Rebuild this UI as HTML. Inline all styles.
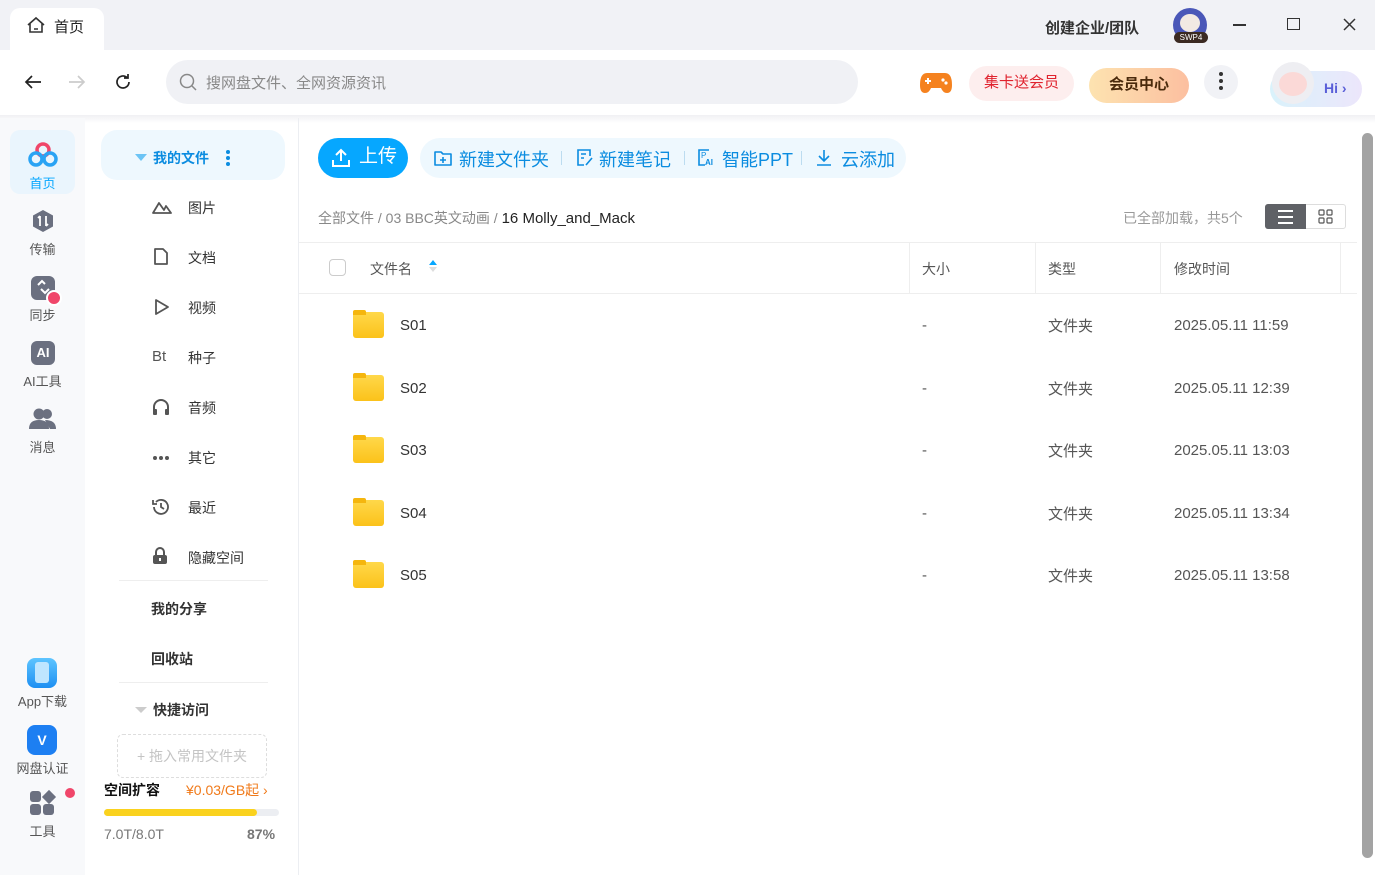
<!DOCTYPE html>
<html><head><meta charset="utf-8"><style>
*{box-sizing:border-box;margin:0;padding:0}
body{width:1375px;height:875px;overflow:hidden;background:#fff;font-family:"Liberation Sans","Noto Sans CJK SC",sans-serif;color:#333;position:relative}
.a{position:absolute}
.t{position:absolute;white-space:nowrap}
svg{position:absolute}
</style></head><body>
<div class="a" style="left:0;top:0;width:1375px;height:50px;background:#f1f2f6"></div>
<div class="a" style="left:10px;top:8px;width:94px;height:42px;background:#fff;border-radius:10px 10px 0 0"></div>
<svg style="left:26px;top:16px" width="20" height="18" viewBox="0 0 20 18"><path d="M2 9 L10 2 L18 9 M4 7 V16 H16 V7 M8 13 H12" fill="none" stroke="#333" stroke-width="1.6"/></svg>
<div class="t" style="left:54px;top:16px;font-size:15px;color:#222">首页</div>
<div class="t" style="left:1045px;top:17px;font-size:15px;color:#333;font-weight:bold">创建企业/团队</div>
<div class="a" style="left:1173px;top:8px;width:34px;height:34px;border-radius:50%;background:#4a57b8"></div>
<div class="a" style="left:1180px;top:14px;width:20px;height:18px;border-radius:50%;background:#f2e9e3"></div>
<div class="t" style="left:1174px;top:32px;width:34px;height:11px;background:#3b2a22;border-radius:6px;color:#fff;font-size:8px;text-align:center;line-height:11px">SWP4</div>
<div class="a" style="left:1233px;top:24px;width:13px;height:1.5px;background:#333"></div>
<div class="a" style="left:1287px;top:18px;width:13px;height:12px;border:1.5px solid #333"></div>
<svg style="left:1343px;top:18px" width="13" height="13"><path d="M1 1L12 12M12 1L1 12" stroke="#333" stroke-width="1.5"/></svg>
<svg style="left:24px;top:74px" width="18" height="16"><path d="M17 8H2M8 2L2 8L8 14" fill="none" stroke="#222" stroke-width="1.7"/></svg>
<svg style="left:68px;top:74px" width="18" height="16"><path d="M1 8H16M10 2L16 8L10 14" fill="none" stroke="#ccc" stroke-width="1.7"/></svg>
<svg style="left:114px;top:73px" width="18" height="18"><path d="M15 9A6 6 0 1 1 13 4.5M14 1V5H10" fill="none" stroke="#222" stroke-width="1.7"/></svg>
<div class="a" style="left:166px;top:60px;width:692px;height:44px;background:#f0f1f5;border-radius:22px"></div>
<svg style="left:179px;top:73px" width="20" height="20"><circle cx="8" cy="8" r="6.5" fill="none" stroke="#888" stroke-width="1.5"/><path d="M13 13L17 17" stroke="#888" stroke-width="1.5"/></svg>
<div class="t" style="left:206px;top:72px;font-size:15px;color:#888">搜网盘文件、全网资源资讯</div>
<svg style="left:919px;top:71px" width="34" height="24"><path d="M8 2H26Q33 2 33 14Q33 22 28 22Q24 22 22 17H12Q10 22 6 22Q1 22 1 14Q1 2 8 2Z" fill="#f5821f"/><path d="M6 10H12M9 7V13" stroke="#fff" stroke-width="2"/><circle cx="24" cy="9" r="1.6" fill="#fff"/><circle cx="27" cy="12" r="1.6" fill="#fff"/></svg>
<div class="t" style="left:969px;top:66px;width:105px;height:35px;border-radius:18px;background:#fdeeee;color:#e0232e;font-size:15px;text-align:center;line-height:33px">集卡送会员</div>
<div class="t" style="left:1089px;top:68px;width:100px;height:35px;border-radius:18px;background:linear-gradient(90deg,#fde3b0,#fcbfa0);color:#4a2a0c;font-size:15px;font-weight:bold;text-align:center;line-height:33px">会员中心</div>
<div class="a" style="left:1204px;top:65px;width:34px;height:34px;border-radius:50%;background:#f1f2f6"></div>
<div class="a" style="left:1219px;top:72px;width:4px;height:4px;border-radius:50%;background:#333;box-shadow:0 7px 0 #333,0 14px 0 #333"></div>
<div class="a" style="left:1270px;top:71px;width:92px;height:36px;border-radius:18px;background:linear-gradient(90deg,#d9f2fb,#ece6fb)"></div>
<div class="a" style="left:1272px;top:62px;width:42px;height:42px;border-radius:50%;background:#eeeef2"></div>
<div class="a" style="left:1279px;top:72px;width:28px;height:24px;border-radius:50%;background:#fbd9d7"></div>
<div class="t" style="left:1324px;top:80px;font-size:14px;color:#5a5fd8;font-weight:bold">Hi ›</div>
<div class="a" style="left:0;top:115px;width:1375px;height:8px;background:linear-gradient(#f0f0f3,#fff)"></div>
<div class="a" style="left:0;top:118px;width:85px;height:757px;background:#f8f9fb"></div>
<div class="a" style="left:10px;top:130px;width:65px;height:64px;border-radius:10px;background:#eaf5fd"></div>
<svg style="left:28px;top:142px" width="30" height="26"><circle cx="15" cy="8" r="6" fill="none" stroke="#f0466a" stroke-width="3.5"/><circle cx="8" cy="17" r="6" fill="none" stroke="#2aa3f4" stroke-width="3.5"/><circle cx="22" cy="17" r="6" fill="none" stroke="#2aa3f4" stroke-width="3.5"/></svg>
<div class="t" style="left:0;top:173px;width:85px;text-align:center;font-size:13px;color:#06a7ff">首页</div>
<svg style="left:31px;top:209px" width="24" height="24"><path d="M12 1L22 6.5V17.5L12 23L2 17.5V6.5Z" fill="#6b7080"/><path d="M9 7V17M9 7L7 9M15 7V17M15 17L17 15" stroke="#fff" stroke-width="1.8"/></svg>
<div class="t" style="left:0;top:239px;width:85px;text-align:center;font-size:13px;color:#555">传输</div>
<div class="a" style="left:31px;top:276px;width:24px;height:24px;border-radius:6px;background:#6b7080"></div>
<svg style="left:34px;top:279px" width="18" height="18"><path d="M4 6L8 2L11 5M7 10L11 14L15 10" fill="none" stroke="#fff" stroke-width="2"/></svg>
<div class="a" style="left:46px;top:290px;width:16px;height:16px;border-radius:50%;background:#f0466a;border:2px solid #fff"></div>
<div class="t" style="left:0;top:305px;width:85px;text-align:center;font-size:13px;color:#555">同步</div>
<div class="t" style="left:31px;top:341px;width:24px;height:24px;border-radius:6px;background:#6b7080;color:#fff;font-size:13px;font-weight:bold;text-align:center;line-height:24px">AI</div>
<div class="t" style="left:0;top:371px;width:85px;text-align:center;font-size:13px;color:#555">AI工具</div>
<svg style="left:29px;top:407px" width="28" height="24"><circle cx="10" cy="7" r="5.5" fill="#6b7080"/><path d="M0 22Q0 13 10 13Q20 13 20 22Z" fill="#6b7080"/><circle cx="18" cy="7" r="5" fill="#6b7080"/><path d="M16 13Q27 13 27 22H21Z" fill="#6b7080"/></svg>
<div class="t" style="left:0;top:437px;width:85px;text-align:center;font-size:13px;color:#555">消息</div>
<div class="a" style="left:27px;top:658px;width:30px;height:30px;border-radius:8px;background:linear-gradient(#5ec5ff,#1d8ff2)"></div>
<div class="a" style="left:35px;top:662px;width:14px;height:21px;border-radius:3px;background:#bfe6ff"></div>
<div class="t" style="left:0;top:691px;width:85px;text-align:center;font-size:13px;color:#555">App下载</div>
<div class="t" style="left:27px;top:725px;width:30px;height:30px;border-radius:8px;background:#1d7ff2;color:#fff;font-size:14px;font-weight:bold;text-align:center;line-height:30px">V</div>
<div class="t" style="left:0;top:758px;width:85px;text-align:center;font-size:13px;color:#555">网盘认证</div>
<div class="a" style="left:30px;top:791px;width:11px;height:11px;border-radius:3px;background:#6b7080;box-shadow:13px 13px 0 #6b7080,0 13px 0 #6b7080"></div>
<div class="a" style="left:44px;top:792px;width:10px;height:10px;background:#6b7080;transform:rotate(45deg)"></div>
<div class="a" style="left:65px;top:788px;width:10px;height:10px;border-radius:50%;background:#f0466a"></div>
<div class="t" style="left:0;top:821px;width:85px;text-align:center;font-size:13px;color:#555">工具</div>
<div class="a" style="left:298px;top:118px;width:1px;height:757px;background:#eceef2"></div>
<div class="a" style="left:101px;top:130px;width:184px;height:50px;border-radius:16px;background:#eef8fe"></div>
<div class="a" style="left:135px;top:154px;border-left:6px solid transparent;border-right:6px solid transparent;border-top:7px solid #6cc4f5"></div>
<div class="t" style="left:153px;top:148px;font-size:14px;font-weight:bold;color:#0b8ce0">我的文件</div>
<div class="a" style="left:226px;top:150px;width:4px;height:4px;border-radius:50%;background:#0b8ce0;box-shadow:0 6px 0 #0b8ce0,0 12px 0 #0b8ce0"></div>
<div style="font-size:14px;color:#333">
<svg style="left:152px;top:199px" width="20" height="16"><path d="M1 14L7 4L12 11L14 7L19 14Z" fill="none" stroke="#555" stroke-width="1.8" stroke-linejoin="round"/></svg>
<div class="t" style="left:188px;top:198px">图片</div>
<svg style="left:154px;top:248px" width="14" height="17"><path d="M1 1H9L13 5V16H1Z" fill="none" stroke="#555" stroke-width="1.8" stroke-linejoin="round"/></svg>
<div class="t" style="left:188px;top:248px">文档</div>
<svg style="left:154px;top:298px" width="16" height="18"><path d="M2 2L14 9L2 16Z" fill="none" stroke="#555" stroke-width="1.8" stroke-linejoin="round"/></svg>
<div class="t" style="left:188px;top:298px">视频</div>
<div class="t" style="left:152px;top:348px;color:#555;font-size:15px">Bt</div>
<div class="t" style="left:188px;top:348px">种子</div>
<svg style="left:152px;top:398px" width="18" height="18"><path d="M2 15V9A7 7 0 0 1 16 9V15" fill="none" stroke="#555" stroke-width="2"/><rect x="1" y="11" width="4" height="6" rx="1" fill="#555"/><rect x="13" y="11" width="4" height="6" rx="1" fill="#555"/></svg>
<div class="t" style="left:188px;top:398px">音频</div>
<div class="a" style="left:153px;top:456px;width:4px;height:4px;border-radius:50%;background:#555;box-shadow:6px 0 0 #555,12px 0 0 #555"></div>
<div class="t" style="left:188px;top:448px">其它</div>
<svg style="left:151px;top:498px" width="20" height="18"><path d="M3 9A7 7 0 1 0 5 4M2 2V6H6M10 5V9L13 11" fill="none" stroke="#555" stroke-width="1.8"/></svg>
<div class="t" style="left:188px;top:498px">最近</div>
<svg style="left:152px;top:547px" width="16" height="18"><path d="M4 8V5A4 4 0 0 1 12 5V8" fill="none" stroke="#555" stroke-width="2"/><rect x="1" y="8" width="14" height="9" rx="2" fill="#555"/><rect x="7" y="11" width="2" height="3" fill="#fff"/></svg>
<div class="t" style="left:188px;top:548px">隐藏空间</div>
</div>
<div class="a" style="left:119px;top:580px;width:149px;height:1px;background:#eee"></div>
<div class="t" style="left:151px;top:599px;font-size:14px;font-weight:bold;color:#333">我的分享</div>
<div class="t" style="left:151px;top:649px;font-size:14px;font-weight:bold;color:#333">回收站</div>
<div class="a" style="left:119px;top:682px;width:149px;height:1px;background:#eee"></div>
<div class="a" style="left:135px;top:707px;border-left:6px solid transparent;border-right:6px solid transparent;border-top:6px solid #ccc"></div>
<div class="t" style="left:153px;top:700px;font-size:14px;font-weight:bold;color:#333">快捷访问</div>
<div class="t" style="left:117px;top:734px;width:150px;height:44px;border:1px dashed #ddd;border-radius:6px;text-align:center;line-height:42px;font-size:14px;color:#c4c4c4">+ 拖入常用文件夹</div>
<div class="t" style="left:104px;top:780px;font-size:14px;font-weight:bold;color:#111">空间扩容</div>
<div class="t" style="left:186px;top:780px;font-size:14px;color:#f07a1a">¥0.03/GB起 ›</div>
<div class="a" style="left:104px;top:809px;width:175px;height:7px;border-radius:4px;background:#eceef2"></div>
<div class="a" style="left:104px;top:809px;width:153px;height:7px;border-radius:4px;background:#fad21e"></div>
<div class="t" style="left:104px;top:826px;font-size:14px;color:#777">7.0T/8.0T</div>
<div class="t" style="left:247px;top:826px;font-size:14px;color:#777;font-weight:bold">87%</div>
<div class="t" style="left:318px;top:138px;width:90px;height:40px;border-radius:20px;background:#06a7ff;color:#fff;font-size:19px;line-height:38px;padding-left:41px">上传</div>
<svg style="left:331px;top:148px" width="20" height="20"><path d="M10 13V2M5 7L10 2L15 7M2 12V18H18V12" fill="none" stroke="#fff" stroke-width="2"/></svg>
<div class="a" style="left:420px;top:138px;width:486px;height:40px;border-radius:20px;background:#eef8fe"></div>
<div style="color:#0b8ce0;font-size:18px">
<svg style="left:434px;top:149px" width="18" height="18"><path d="M1 3H7L9 5H17V16H1Z" fill="none" stroke="#0b8ce0" stroke-width="1.6" stroke-linejoin="round"/><path d="M9 8V14M6 11H12" stroke="#0b8ce0" stroke-width="1.6"/></svg>
<div class="t" style="left:459px;top:146px">新建文件夹</div>
<div class="a" style="left:561px;top:151px;width:1px;height:14px;background:#bcdcf0"></div>
<svg style="left:576px;top:148px" width="17" height="19"><path d="M14 8V2H2V17H8" fill="none" stroke="#0b8ce0" stroke-width="1.6"/><path d="M5 6H10M5 10H8M10 17L16 10" stroke="#0b8ce0" stroke-width="1.6"/></svg>
<div class="t" style="left:599px;top:146px">新建笔记</div>
<div class="a" style="left:684px;top:151px;width:1px;height:14px;background:#bcdcf0"></div>
<svg style="left:697px;top:148px" width="18" height="19"><path d="M12 2H2V17H8" fill="none" stroke="#0b8ce0" stroke-width="1.6"/><text x="8" y="17" font-size="8" font-weight="bold" fill="#0b8ce0" font-family="Liberation Sans">AI</text><text x="4" y="10" font-size="8" fill="#0b8ce0" font-family="Liberation Sans">P</text></svg>
<div class="t" style="left:722px;top:146px">智能PPT</div>
<div class="a" style="left:801px;top:151px;width:1px;height:14px;background:#bcdcf0"></div>
<svg style="left:815px;top:149px" width="18" height="18"><path d="M9 1V12M4 7L9 12L14 7M2 16H16" fill="none" stroke="#0b8ce0" stroke-width="1.6"/></svg>
<div class="t" style="left:841px;top:146px">云添加</div>
</div>
<div class="t" style="left:318px;top:208px;font-size:14px;color:#888">全部文件 / 03 BBC英文动画 / <span style="color:#222;font-size:15px">16 Molly_and_Mack</span></div>
<div class="t" style="left:1123px;top:208px;font-size:14px;color:#999">已全部加载，共5个</div>
<div class="a" style="left:1265px;top:204px;width:81px;height:25px;border:1px solid #ddd;border-radius:3px"></div>
<div class="a" style="left:1265px;top:204px;width:41px;height:25px;background:#5f6166;border-radius:3px 0 0 3px"></div>
<div class="a" style="left:1278px;top:210px;width:15px;height:1.5px;background:#fff;box-shadow:0 6px 0 #fff,0 12px 0 #fff"></div>
<svg style="left:1318px;top:209px" width="15" height="15"><rect x="1" y="1" width="5" height="5" rx="1" fill="none" stroke="#555" stroke-width="1.2"/><rect x="9" y="1" width="5" height="5" rx="1" fill="none" stroke="#555" stroke-width="1.2"/><rect x="1" y="9" width="5" height="5" rx="1" fill="none" stroke="#555" stroke-width="1.2"/><rect x="9" y="9" width="5" height="5" rx="1" fill="none" stroke="#555" stroke-width="1.2"/></svg>
<div class="a" style="left:299px;top:242px;width:1058px;height:1px;background:#eee"></div>
<div class="a" style="left:299px;top:293px;width:1058px;height:1px;background:#eee"></div>
<div class="a" style="left:909px;top:243px;width:1px;height:50px;background:#eee"></div>
<div class="a" style="left:1035px;top:243px;width:1px;height:50px;background:#eee"></div>
<div class="a" style="left:1160px;top:243px;width:1px;height:50px;background:#eee"></div>
<div class="a" style="left:1340px;top:243px;width:1px;height:50px;background:#eee"></div>
<div class="a" style="left:329px;top:259px;width:17px;height:17px;border:1px solid #ccc;border-radius:4px"></div>
<div style="font-size:14px;color:#555">
<div class="t" style="left:370px;top:259px">文件名</div>
<div class="a" style="left:429px;top:260px;border-left:4px solid transparent;border-right:4px solid transparent;border-bottom:5px solid #06a7ff"></div>
<div class="a" style="left:429px;top:267px;border-left:4px solid transparent;border-right:4px solid transparent;border-top:5px solid #ddd"></div>
<div class="t" style="left:922px;top:259px">大小</div>
<div class="t" style="left:1048px;top:259px">类型</div>
<div class="t" style="left:1174px;top:259px">修改时间</div>
</div>
<div style="font-size:15px;color:#333">
<div class="a" style="left:353px;top:312px;width:31px;height:26px;border-radius:3px;background:linear-gradient(#ffd84a,#fbc21a)"></div><div class="a" style="left:353px;top:310px;width:13px;height:5px;border-radius:2px 2px 0 0;background:#f5b60e"></div>
<div class="t" style="left:400px;top:317px">S01</div><div class="t" style="left:922px;top:317px;color:#555">-</div><div class="t" style="left:1048px;top:315px;color:#555">文件夹</div><div class="t" style="left:1174px;top:317px;color:#555">2025.05.11 11:59</div>
<div class="a" style="left:353px;top:375px;width:31px;height:26px;border-radius:3px;background:linear-gradient(#ffd84a,#fbc21a)"></div><div class="a" style="left:353px;top:373px;width:13px;height:5px;border-radius:2px 2px 0 0;background:#f5b60e"></div>
<div class="t" style="left:400px;top:380px">S02</div><div class="t" style="left:922px;top:380px;color:#555">-</div><div class="t" style="left:1048px;top:378px;color:#555">文件夹</div><div class="t" style="left:1174px;top:380px;color:#555">2025.05.11 12:39</div>
<div class="a" style="left:353px;top:437px;width:31px;height:26px;border-radius:3px;background:linear-gradient(#ffd84a,#fbc21a)"></div><div class="a" style="left:353px;top:435px;width:13px;height:5px;border-radius:2px 2px 0 0;background:#f5b60e"></div>
<div class="t" style="left:400px;top:442px">S03</div><div class="t" style="left:922px;top:442px;color:#555">-</div><div class="t" style="left:1048px;top:440px;color:#555">文件夹</div><div class="t" style="left:1174px;top:442px;color:#555">2025.05.11 13:03</div>
<div class="a" style="left:353px;top:500px;width:31px;height:26px;border-radius:3px;background:linear-gradient(#ffd84a,#fbc21a)"></div><div class="a" style="left:353px;top:498px;width:13px;height:5px;border-radius:2px 2px 0 0;background:#f5b60e"></div>
<div class="t" style="left:400px;top:505px">S04</div><div class="t" style="left:922px;top:505px;color:#555">-</div><div class="t" style="left:1048px;top:503px;color:#555">文件夹</div><div class="t" style="left:1174px;top:505px;color:#555">2025.05.11 13:34</div>
<div class="a" style="left:353px;top:562px;width:31px;height:26px;border-radius:3px;background:linear-gradient(#ffd84a,#fbc21a)"></div><div class="a" style="left:353px;top:560px;width:13px;height:5px;border-radius:2px 2px 0 0;background:#f5b60e"></div>
<div class="t" style="left:400px;top:567px">S05</div><div class="t" style="left:922px;top:567px;color:#555">-</div><div class="t" style="left:1048px;top:565px;color:#555">文件夹</div><div class="t" style="left:1174px;top:567px;color:#555">2025.05.11 13:58</div>
</div>
<div class="a" style="left:1362px;top:133px;width:11px;height:725px;border-radius:6px;background:#a3a3a3"></div>
</body></html>
